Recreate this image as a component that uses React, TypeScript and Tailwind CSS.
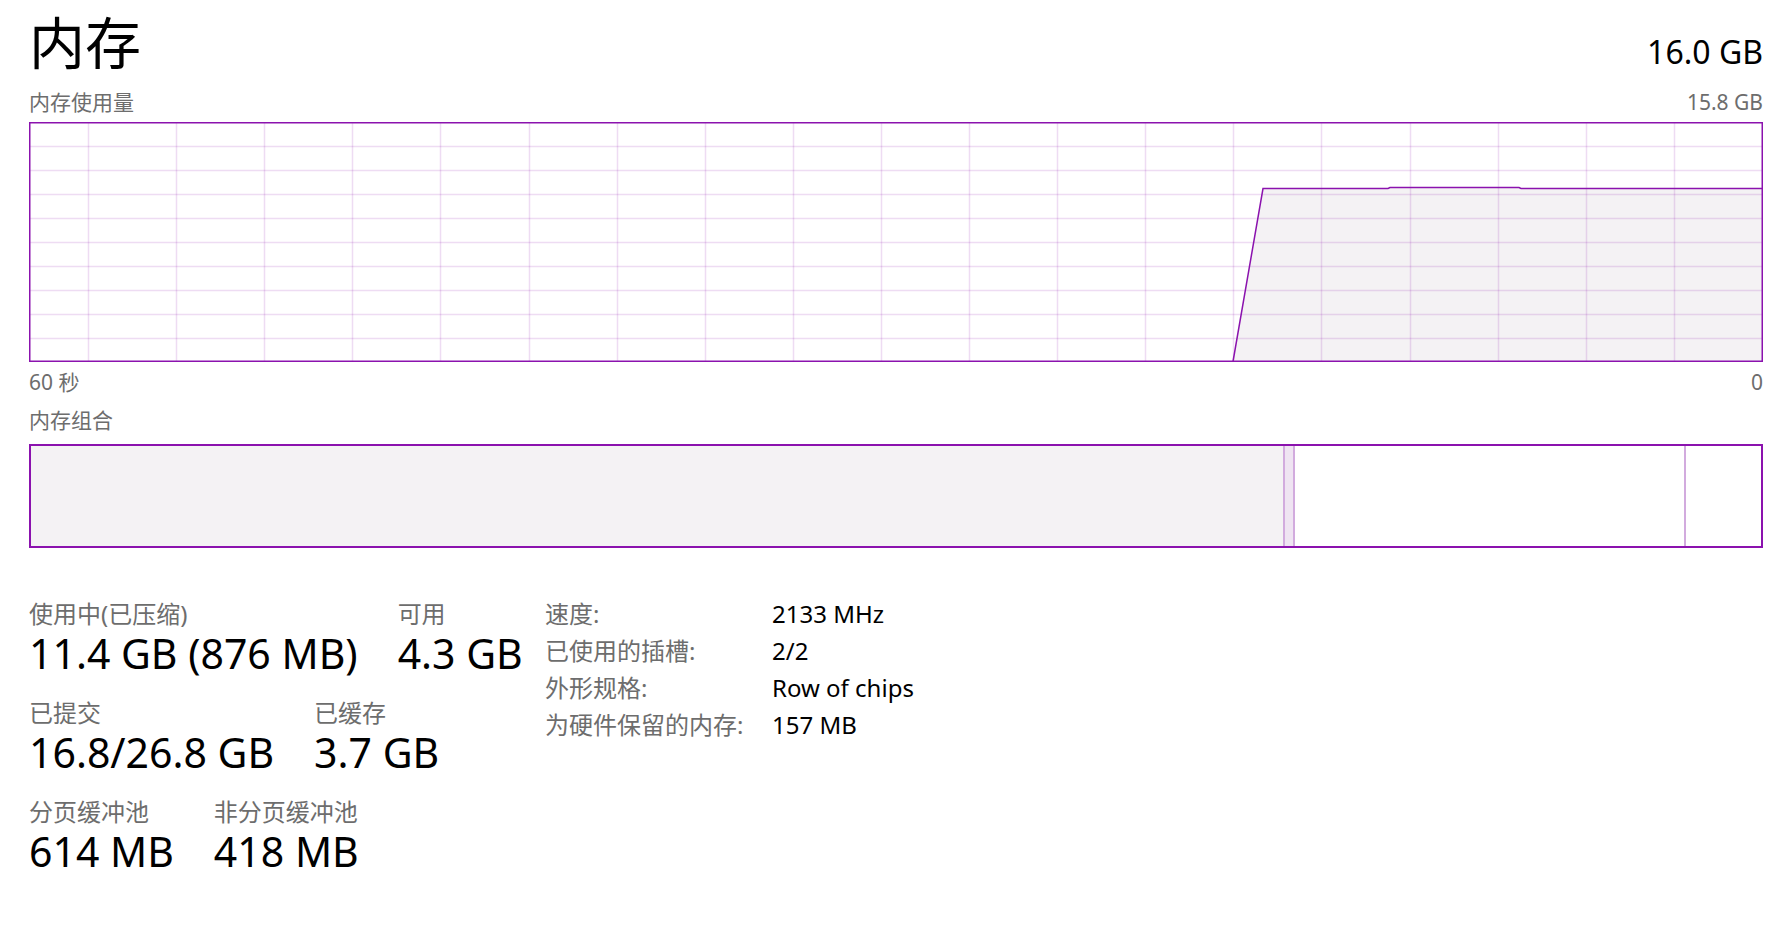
import React from 'react';

const PURPLE = '#8b12ae';

// Chart geometry (local to the 1734x240 usage graph)
const W = 1734;
const H = 240;

const UsageGraph = () => {
  const verticals = Array.from({ length: 19 }, (_, k) => Math.round(59 + k * 88.1) + 0.5);
  const horizontals = Array.from({ length: 9 }, (_, k) => (k + 1) * 24 + 0.5);

  // memory usage trace, starting 60s ago at the left
  const trace: [number, number][] = [
    [1204, 239.5],
    [1234, 66.5],
    [1359, 66.5],
    [1361, 65.5],
    [1490, 65.5],
    [1492, 66.5],
    [1733, 66.5],
  ];
  const fillPoints = [...trace, [1733, 239.5]].map((p) => p.join(',')).join(' ');
  const linePoints = trace.map((p) => p.join(',')).join(' ');

  return (
    <svg width={W} height={H} viewBox={`0 0 ${W} ${H}`} className="block">
      <rect x={0} y={0} width={W} height={H} fill="#ffffff" />
      <polygon points={fillPoints} fill="#f4f2f4" />
      {verticals.map((x) => (
        <line key={'v' + x} x1={x} y1={0} x2={x} y2={H} stroke={PURPLE} strokeOpacity={0.15} strokeWidth={1.5} />
      ))}
      {horizontals.map((y) => (
        <line key={'h' + y} x1={0} y1={y} x2={W} y2={y} stroke={PURPLE} strokeOpacity={0.15} strokeWidth={1.5} />
      ))}
      <polyline points={linePoints} fill="none" stroke={PURPLE} strokeWidth={1.5} />
      <rect x={0.75} y={0.75} width={W - 1.5} height={H - 1.5} fill="none" stroke={PURPLE} strokeWidth={1.5} />
    </svg>
  );
};

const Stat = ({ label, value }: { label: string; value: string }) => (
  <div className="flex flex-col">
    <span className="text-[24px] leading-[30px] text-[#6d6d6d]">{label}</span>
    <span className="text-[41px] leading-[48px] text-black">{value}</span>
  </div>
);

const statRows = [
  [
    { label: '使用中(已压缩)', value: '11.4 GB (876 MB)' },
    { label: '可用', value: '4.3 GB' },
  ],
  [
    { label: '已提交', value: '16.8/26.8 GB' },
    { label: '已缓存', value: '3.7 GB' },
  ],
  [
    { label: '分页缓冲池', value: '614 MB' },
    { label: '非分页缓冲池', value: '418 MB' },
  ],
];

const details = [
  { label: '速度:', value: '2133 MHz' },
  { label: '已使用的插槽:', value: '2/2' },
  { label: '外形规格:', value: 'Row of chips' },
  { label: '为硬件保留的内存:', value: '157 MB' },
];

export default function App() {
  return (
    <div className="w-[1783px] h-[931px] bg-white pl-[29px] pr-[20px] pt-[10px] font-['Noto_Sans','Noto_Sans_CJK_SC',sans-serif] overflow-hidden">
      {/* Header */}
      <div className="flex items-baseline justify-between">
        <h1 className="text-[56px] leading-[64px] font-normal text-black">内存</h1>
        <span className="text-[32px] leading-[40px] text-black">16.0 GB</span>
      </div>

      {/* Usage graph */}
      <div className="mt-[16px] flex items-baseline justify-between text-[21px] leading-[24px] text-[#6d6d6d]">
        <span>内存使用量</span>
        <span>15.8 GB</span>
      </div>
      <div className="mt-[8px]">
        <UsageGraph />
      </div>
      <div className="mt-[8px] flex items-baseline justify-between text-[21px] leading-[24px] text-[#6d6d6d]">
        <span>60 秒</span>
        <span>0</span>
      </div>

      {/* Composition */}
      <div className="mt-[14px] text-[21px] leading-[24px] text-[#6d6d6d]">内存组合</div>
      <div className="mt-[12px] flex h-[104px] border-2 border-[#8b12ae]">
        <div className="w-[1252px] bg-[#f4f2f4]" />
        <div className="w-[12px] border-x-2 border-[#d2abde] bg-[#efe4f2]" />
        <div className="flex-1 border-r-2 border-[#d2abde] bg-white" />
        <div className="w-[75px] bg-white" />
      </div>

      {/* Stats */}
      <div className="mt-[47px] flex items-start">
        <div className="w-[516px] pt-[4px] flex flex-col gap-[21px]">
          {statRows.map((row, i) => (
            <div key={i} className="flex gap-[40px]">
              {row.map((s) => (
                <Stat key={s.label} label={s.label} value={s.value} />
              ))}
            </div>
          ))}
        </div>
        <div className="grid grid-cols-[227px_auto] text-[24px] leading-[37px]">
          {details.map((d) => (
            <React.Fragment key={d.label}>
              <span className="text-[#6d6d6d]">{d.label}</span>
              <span className="text-black">{d.value}</span>
            </React.Fragment>
          ))}
        </div>
      </div>
    </div>
  );
}
